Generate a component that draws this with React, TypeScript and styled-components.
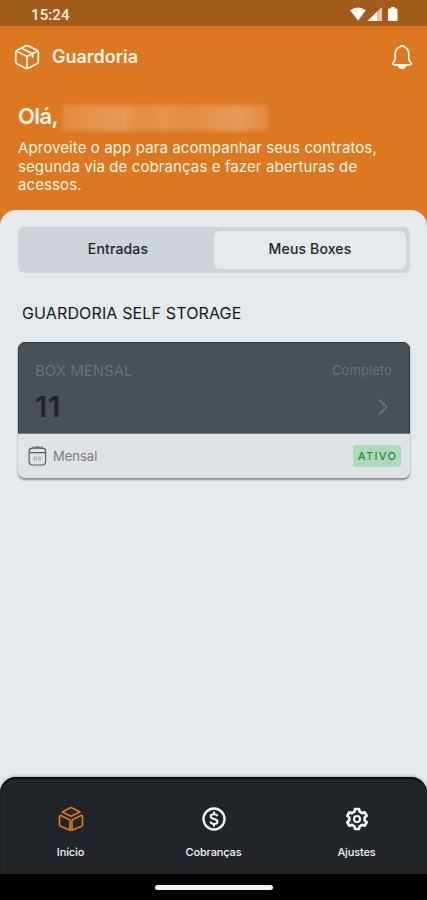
import React from "react";
import styled, { createGlobalStyle } from "styled-components";

const GlobalStyle = createGlobalStyle`
  * { box-sizing: border-box; }
  body { margin: 0; background: #000; font-family: Inter, "Liberation Sans", sans-serif; }
`;

const Screen = styled.div`
  width: 427px;
  height: 900px;
  display: flex;
  flex-direction: column;
  overflow: hidden;
  background: #dc7920;
`;

const StatusBar = styled.div`
  flex: none;
  height: 26px;
  padding: 4px 28px 0 31px;
  display: flex;
  align-items: center;
  justify-content: space-between;
  background: #a35b19;
  color: #fdeee0;
`;

const Clock = styled.span`
  font: 500 15px/20px Roboto, sans-serif;
  letter-spacing: 0.1px;
`;

const Header = styled.header`
  flex: none;
  height: 184px;
  padding: 17px 14px 0 18px;
  color: #fff4e8;
`;

const TitleBar = styled.div`
  display: flex;
  align-items: center;
  height: 27px;
  margin-left: -4px;
`;

const AppName = styled.h1`
  flex: 1;
  margin: 0 0 0 12px;
  font-size: 18px;
  font-weight: 600;
  line-height: 26px;
  letter-spacing: 0;
`;

const Greeting = styled.div`
  display: flex;
  align-items: center;
  height: 30px;
  margin-top: 31px;
`;

const Hello = styled.h2`
  margin: 0;
  width: 44px;
  font-size: 22px;
  font-weight: 600;
  line-height: 30px;
  letter-spacing: -0.6px;
`;

const HiddenName = styled.div`
  width: 206px;
  height: 26px;
  margin-top: 3px;
  background: linear-gradient(90deg, #e08a3c, #e4924c 12%, #e59855 30%, #e18c42 39%, #e4954f 50%, #e18c42 61%, #e4954f 75%, #e59a58 86%, #e08a3e);
  filter: blur(2.2px);
`;

const Intro = styled.p`
  margin: 8px 0 0;
  font-size: 15px;
  line-height: 18.6px;
  letter-spacing: 0.1px;
  white-space: nowrap;
`;

const Sheet = styled.main`
  flex: 1;
  padding: 17px 17px 0 18px;
  display: flex;
  flex-direction: column;
  background: #e4e9ec;
  border-radius: 16px 16px 0 0;
`;

const Tabs = styled.div`
  height: 46px;
  padding: 4px;
  display: grid;
  grid-template-columns: 1fr 1fr;
  background: #ced4da;
  border-radius: 6px;
`;

const Tab = styled.button<{ $active?: boolean }>`
  border: 0;
  padding: 0 0 2px;
  border-radius: 6px;
  background: ${(p) => (p.$active ? "#e4e9ec" : "transparent")};
  color: #202428;
  font: 500 14px/18px Inter, sans-serif;
  letter-spacing: 0.15px;
`;

const SectionTitle = styled.h3`
  margin: 30px 0 0 4px;
  font-size: 16px;
  font-weight: 400;
  line-height: 20px;
  letter-spacing: 0.14px;
  color: #14171a;
`;

const Card = styled.article`
  height: 136px;
  margin-top: 19px;
  display: flex;
  flex-direction: column;
  overflow: hidden;
  border-radius: 7px;
  background: #dfe3e6;
  box-shadow: 0 2px 2px rgba(30, 36, 42, 0.48);
`;

const CardBody = styled.div`
  height: 92px;
  padding: 18px 18px 0 17px;
  background: #495057;
  border-bottom: 1px solid #777e83;
  box-shadow: inset 0 1px 1px #30363b, inset -1px 0 #353b40, inset 1px 0 #353b40;
`;

const Row = styled.div<{ $height: number; $inset?: number }>`
  display: flex;
  align-items: center;
  justify-content: space-between;
  height: ${(p) => p.$height}px;
  padding-right: ${(p) => p.$inset ?? 0}px;
`;

const BoxKind = styled.span`
  font-size: 15px;
  letter-spacing: 0;
  color: #6b7278;
`;

const Access = styled.span`
  font-size: 13px;
  letter-spacing: 0.1px;
  color: #6b7278;
`;

const BoxNumber = styled.strong`
  font-size: 29px;
  font-weight: 600;
  letter-spacing: 0.8px;
  color: #212529;
`;

const CardFooter = styled.div`
  flex: 1;
  display: flex;
  align-items: center;
  padding: 0 9px 0 10px;
`;

const Period = styled.span`
  flex: 1;
  margin-left: 6px;
  font-size: 13px;
  letter-spacing: 0;
  color: #777d82;
`;

const Badge = styled.span`
  width: 48px;
  height: 22px;
  padding-left: 1px;
  border-radius: 3px;
  background: #afd9bb;
  color: #2b8a3e;
  font-size: 11px;
  font-weight: 500;
  line-height: 23px;
  letter-spacing: 1.3px;
  text-align: center;
`;

const NavArea = styled.div`
  flex: none;
  background: #e4e9ec;
`;

const Nav = styled.nav`
  height: 97px;
  display: grid;
  grid-template-columns: 141px 145px 141px;
  background: #212529;
  border-radius: 16px 16px 0 0;
  box-shadow: 0 -1px 3px rgba(0, 0, 0, 0.25), inset 0 2px 1px #0d0f11;
`;

const NavItem = styled.div<{ $active?: boolean }>`
  display: flex;
  flex-direction: column;
  align-items: center;
  padding-top: 29px;
  color: ${(p) => (p.$active ? "#dc7920" : "#f8f9fa")};
`;

const NavLabel = styled.span`
  margin-top: 13px;
  color: #f1f3f5;
  font-size: 11px;
  font-weight: 500;
  line-height: 14px;
  letter-spacing: -0.13px;
`;

const HomeBar = styled.div`
  height: 26px;
  display: flex;
  align-items: center;
  justify-content: center;
  background: #000;
`;

const HomeHandle = styled.div`
  width: 118px;
  height: 5px;
  border-radius: 3px;
  background: #f2f2f2;
`;

const StatusIcons = () => (
  <svg width="50" height="16" viewBox="0 0 50 16" fill="#fff">
    <path d="M1 3.200Q9-2 17 3.200L9 13.500Z" />
    <path d="M33 0V14H18.500Z" fillOpacity=".65" />
    <path d="M28 4.800V14H18.500Z" />
    <path d="M39.500 1.500H42V0h4v1.500H47.500q1 0 1 1V13q0 1-1 1h-7.500q-1 0-1-1V2.500q0-1 .5-1Z" />
  </svg>
);

const PackageIcon = () => (
  <svg width="26" height="26" viewBox="0 0 26 26" fill="none" stroke="currentColor" strokeWidth="1.800" strokeLinejoin="round" strokeLinecap="round">
    <path d="M11.800 1.900 3 6.300Q1.700 7 1.700 8.300V17.800Q1.700 19 3 19.700L11.800 24.200Q13 24.800 14.200 24.200L23 19.700Q24.300 19 24.300 17.800V8.300Q24.300 7 23 6.300L14.200 1.900Q13 1.300 11.800 1.900Z" />
    <path d="M2.300 7 13 12.500 23.700 7M13 12.500V24" />
    <path d="M7.500 4.200 18.700 9.800V13" />
  </svg>
);

const BellIcon = () => (
  <svg width="22" height="26" viewBox="0 0 22 26" fill="none" stroke="currentColor" strokeWidth="1.800" strokeLinejoin="round" strokeLinecap="round">
    <path d="M9 3C9 1.300 13 1.300 13 3 16.500 4 17.800 7 17.800 10V14.500Q17.800 16.500 19.600 18.300C21.300 20.300 19.500 21 17.500 21H4.500C2.500 21 .7 20.300 2.400 18.300Q4.200 16.500 4.200 14.500V10C4.200 7 5.500 4 9 3Z" />
    <path d="M7.500 21.500Q8.500 24.300 11 24.300T14.500 21.500Z" fill="currentColor" />
  </svg>
);

const CalendarIcon = () => (
  <svg width="19" height="20" viewBox="0 0 19 20" fill="none" stroke="#555b60" strokeWidth="1.200">
    <rect x="1.100" y="2.200" width="16.500" height="16.800" rx="3.500" />
    <path d="M1.500 6.600H17.500M5.200 .6V3M13.500 .6V3M7 1.100H11.700" />
    <path d="M6 11h2.500v3H6ZM10.500 11H13v3h-2.500Z" stroke="#a5aaae" strokeWidth="1" />
  </svg>
);

const ChevronIcon = () => (
  <svg width="10" height="18" viewBox="0 0 10 18" fill="none" stroke="#737a80" strokeWidth="1.400">
    <path d="m1 1.500 7.500 7.500L1 16.500" />
  </svg>
);

const BoxesIcon = () => (
  <svg width="26" height="26" viewBox="0 0 26 26" fill="none" stroke="currentColor" strokeWidth="1.700" strokeLinejoin="round">
    <path d="M12.300 1.700Q13 1.300 13.700 1.700L21.800 6 13 10.300 4.200 6Z" />
    <path d="M3 9.600 12 14.100V24.300L2.600 20.200Q1.500 19.600 1.500 18.400V10.700Q1.500 9 3 9.600ZM23 9.600 14 14.100V24.300L23.400 20.200Q24.500 19.600 24.500 18.400V10.700Q24.500 9 23 9.600Z" />
  </svg>
);

const DollarIcon = () => (
  <svg width="26" height="26" viewBox="0 0 26 26" fill="none" stroke="currentColor" strokeWidth="2.300">
    <circle cx="13" cy="13" r="10.500" />
    <path d="M13 5.500V8M13 18V20.500M16.500 10.300Q15.800 8.200 13 8.200 9.700 8.200 9.700 10.400C9.700 13.800 16.500 12 16.500 15.500Q16.500 17.900 13 17.900 10 17.900 9.300 15.600" strokeWidth="2" />
  </svg>
);

const GearIcon = () => (
  <svg width="26" height="26" viewBox="-13 -13 26 26" fill="none" stroke="currentColor" strokeWidth="2.700" strokeLinejoin="round">
    <path d="M-2.600-7.300-2-10H2L2.600-7.300 5.020-5.900 7.660-6.730 9.660-3.270 7.620-1.400V1.400L9.660 3.270 7.660 6.730 5.020 5.900 2.600 7.300 2 10H-2L-2.600 7.300-5.020 5.900-7.660 6.730-9.660 3.270-7.620 1.400V-1.400L-9.660-3.270-7.660-6.730-5.020-5.900Z" />
    <circle r="3" strokeWidth="2.100" />
  </svg>
);

export default function App() {
  return (
    <>
      <GlobalStyle />
      <Screen>
        <StatusBar>
          <Clock>15:24</Clock>
          <StatusIcons />
        </StatusBar>
        <Header>
          <TitleBar>
            <PackageIcon />
            <AppName>Guardoria</AppName>
            <BellIcon />
          </TitleBar>
          <Greeting>
            <Hello>Olá,</Hello>
            <HiddenName />
          </Greeting>
          <Intro>
            Aproveite o app para acompanhar seus contratos,
            <br />
            segunda via de cobranças e fazer aberturas de
            <br />
            acessos.
          </Intro>
        </Header>
        <Sheet>
          <Tabs>
            <Tab>Entradas</Tab>
            <Tab $active>Meus Boxes</Tab>
          </Tabs>
          <SectionTitle>GUARDORIA SELF STORAGE</SectionTitle>
          <Card>
            <CardBody>
              <Row $height={20}>
                <BoxKind>BOX MENSAL</BoxKind>
                <Access>Completo</Access>
              </Row>
              <Row $height={53} $inset={4}>
                <BoxNumber>11</BoxNumber>
                <ChevronIcon />
              </Row>
            </CardBody>
            <CardFooter>
              <CalendarIcon />
              <Period>Mensal</Period>
              <Badge>ATIVO</Badge>
            </CardFooter>
          </Card>
        </Sheet>
        <NavArea>
          <Nav>
            <NavItem $active>
              <BoxesIcon />
              <NavLabel>Início</NavLabel>
            </NavItem>
            <NavItem>
              <DollarIcon />
              <NavLabel>Cobranças</NavLabel>
            </NavItem>
            <NavItem>
              <GearIcon />
              <NavLabel>Ajustes</NavLabel>
            </NavItem>
          </Nav>
          <HomeBar>
            <HomeHandle />
          </HomeBar>
        </NavArea>
      </Screen>
    </>
  );
}
